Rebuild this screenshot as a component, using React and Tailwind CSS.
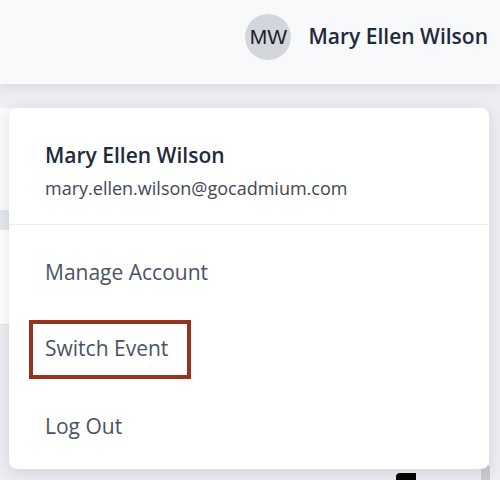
import React from 'react'

const menuItems = [
  { label: 'Manage Account', height: 'h-[77px]' },
  { label: 'Switch Event', height: 'h-[76px]', highlighted: true },
  { label: 'Log Out', height: 'h-[80px]' },
]

const App = () => {
  return (
    <div className="relative w-[500px] h-[480px] overflow-hidden bg-[#eceef2] font-['Open_Sans',sans-serif]">
      {/* Top bar */}
      <header className="relative z-10 h-[84px] bg-[#f8f9fb] shadow-[0_4px_10px_rgba(0,0,0,0.08)] flex items-center justify-end pr-3">
        <div className="flex items-center gap-[17px] -mt-[10px]">
          <div className="w-[46px] h-[46px] rounded-full bg-[#d3d6dc] flex items-center justify-center text-[21px] text-[#1a212c] font-['Liberation_Sans',sans-serif]">
            MW
          </div>
          <span className="text-[21px] font-semibold text-[#1f2a3a]">Mary Ellen Wilson</span>
        </div>
      </header>

      {/* Page content peeking out behind the menu */}
      <div className="pt-6 flex flex-col">
        <div className="w-[40px] h-[102px] bg-[#fafbfc]" />
        <div className="w-[40px] h-[20px] bg-[#e4e7ec]" />
        <div className="w-[40px] h-[95px] bg-white border-b border-[#dfe2e6]" />
      </div>
      <div className="absolute left-[396px] bottom-0 w-[20px] h-[7px] bg-black rounded-tl-[4px]" />
      <div className="absolute left-[481px] bottom-0 w-[9px] h-[14px] bg-[#c9cbcf]" />

      {/* Account dropdown */}
      <div className="absolute left-[9px] top-[108px] w-[480px] rounded-lg bg-white shadow-[0_4px_16px_rgba(15,23,42,0.12)] z-20">
        <div className="h-[117px] border-b border-[#eceef1] pl-9 pt-[33px]">
          <div className="text-[21px] leading-7 font-semibold text-[#1f2a3a]">Mary Ellen Wilson</div>
          <div className="mt-[7px] text-[18px] leading-6 text-[#3f4754]">mary.ellen.wilson@gocadmium.com</div>
        </div>
        <div className="pt-[9px] pb-[2px]">
          {menuItems.map((item) => (
            <div key={item.label} className={`relative ${item.height} flex items-center pl-9 text-[21px] text-[#4a5363]`}>
              {item.highlighted && (
                <div className="absolute left-[20px] top-[9px] w-[162px] h-[59px] border-4 border-[#98321f]" />
              )}
              <span className="relative">{item.label}</span>
            </div>
          ))}
        </div>
      </div>
    </div>
  )
}

export default App
